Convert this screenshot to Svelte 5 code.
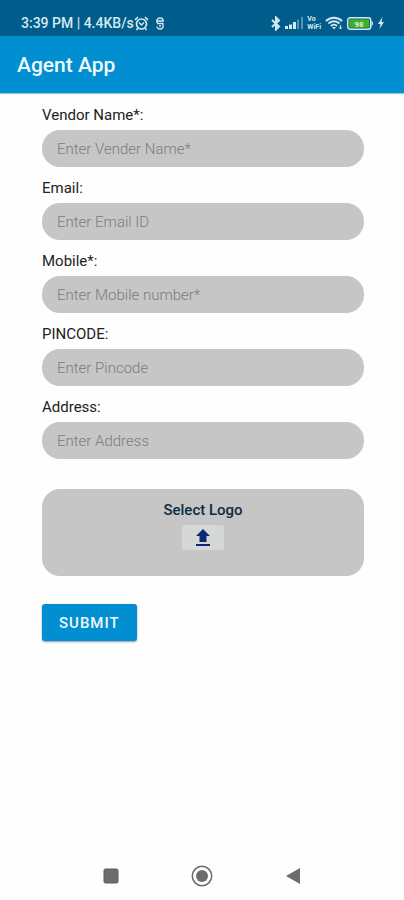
<script lang="ts">
  // Vendor registration form of the agent app.
  type Field = { id: string; label: string; placeholder: string; type: string };

  const fields: Field[] = [
    { id: 'vendor', label: 'Vendor Name*:', placeholder: 'Enter Vender Name*', type: 'text' },
    { id: 'email', label: 'Email:', placeholder: 'Enter Email ID', type: 'email' },
    { id: 'mobile', label: 'Mobile*:', placeholder: 'Enter Mobile number*', type: 'tel' },
    { id: 'pincode', label: 'PINCODE:', placeholder: 'Enter Pincode', type: 'text' },
    { id: 'address', label: 'Address:', placeholder: 'Enter Address', type: 'text' },
  ];

  let values = $state<Record<string, string>>({
    vendor: '',
    email: '',
    mobile: '',
    pincode: '',
    address: '',
  });

  let picker: HTMLInputElement;

  function submit(e: SubmitEvent) {
    e.preventDefault();
  }
</script>

<div class="screen">
  <div class="status">
    <div class="group">
      <span>3:39 PM | 4.4KB/s</span>
      <svg class="alarm" width="15" height="15" viewBox="0 0 15 15" fill="none" stroke="currentColor" aria-hidden="true">
        <circle cx="7.5" cy="8" r="5" stroke-width="1.700" />
        <path d="M1 4l3-3M14 4l-3-3M3.500 12.500l-1 1.500M11.500 12.500l1 1.500" stroke-width="1.700" />
        <path d="M5 6.500l2.500 2.500 2.500-2.500" stroke-width="1.500" />
      </svg>
      <svg width="10" height="13" viewBox="0 0 10 13" fill="none" stroke="currentColor" aria-hidden="true">
        <path d="M2 6V3.500C2 2 3 1 5 1s3 1 3 2.500M1 4h8M2 6.500h6M8 6v3.500C8 11 7 12 5 12s-3-1-3-2.500M4 9h2" stroke-width="1.300" />
      </svg>
    </div>
    <div class="group right">
      <svg width="10" height="15" viewBox="0 0 10 15" fill="none" stroke="currentColor" aria-hidden="true">
        <path d="M1 4l7 6.500L5 13.500v-12l3 3L1 11" stroke-width="2" />
      </svg>
      <svg width="18" height="12" viewBox="0 0 18 12" fill="currentColor" aria-hidden="true">
        <path d="M0 9h3v3H0zM4 7.500h3V12H4zM8 5h3v7H8z" />
        <path d="M12 2.500h2V12h-2zM16 0h2v12h-2z" opacity="0.4" />
      </svg>
      <span class="vowifi"><span>Vo</span><span>WiFi</span></span>
      <svg width="18" height="14" viewBox="0 0 18 14" fill="none" stroke="currentColor" aria-hidden="true">
        <path d="M1 5c4.500-4.500 11.500-4.500 16 0M3.500 7.500c3-3 8-3 11 0M6 10c1.700-1.700 4.300-1.700 6 0" stroke-width="2" />
        <path d="M7 11h4l-2 2.500z" fill="currentColor" stroke="none" />
        <path d="M15.500 9v4M14 11.500l1.500 1.500 1.500-1.500" stroke-width="1" />
      </svg>
      <svg width="27" height="13" viewBox="0 0 27 13" role="img" aria-label="Battery 98 percent">
        <rect x="0.700" y="0.700" width="23" height="11.600" rx="2.500" fill="none" stroke="currentColor" stroke-width="1.400" />
        <rect x="2.200" y="2.200" width="20" height="8.600" rx="1" fill="#3fae29" />
        <path d="M24.500 4c2 .5 2 4.500 0 5z" fill="currentColor" />
        <text x="12" y="9.500" text-anchor="middle">98</text>
      </svg>
      <svg width="6" height="12" viewBox="0 0 6 12" fill="currentColor" aria-hidden="true">
        <path d="M4.500 0L0 7h2.500L1.500 12 6 5H3.500z" />
      </svg>
    </div>
  </div>

  <header>
    <h1>Agent App</h1>
  </header>

  <form onsubmit={submit} novalidate>
    {#each fields as field (field.id)}
      <div class="field">
        <label for={field.id}>{field.label}</label>
        <input id={field.id} type={field.type} placeholder={field.placeholder} bind:value={values[field.id]} />
      </div>
    {/each}

    <div class="logo-box">
      <label for="logo">Select Logo</label>
      <button type="button" class="upload" aria-label="Upload logo" onclick={() => picker.click()}>
        <svg width="16" height="18" viewBox="0 0 16 18" fill="currentColor" aria-hidden="true">
          <path d="M8 0l7 7h-3.500v6h-7V7H1zM1 15h14v2H1z" />
        </svg>
      </button>
      <input id="logo" type="file" accept="image/*" hidden bind:this={picker} />
    </div>

    <button type="submit" class="submit">SUBMIT</button>
  </form>

  <nav aria-label="System">
    <button type="button" aria-label="Recent apps">
      <svg width="22" height="22" viewBox="0 0 22 22" aria-hidden="true">
        <rect x="4" y="4" width="14" height="14" rx="1.500" fill="currentColor" stroke="#5c5c5c" />
      </svg>
    </button>
    <button type="button" aria-label="Home">
      <svg width="22" height="22" viewBox="0 0 22 22" aria-hidden="true">
        <circle cx="11" cy="11" r="9.700" fill="none" stroke="currentColor" stroke-width="1.500" />
        <circle cx="11" cy="11" r="6" fill="currentColor" />
      </svg>
    </button>
    <button type="button" aria-label="Back">
      <svg width="22" height="22" viewBox="0 0 22 22" aria-hidden="true">
        <path d="M4 11L18 3v16z" fill="currentColor" />
      </svg>
    </button>
  </nav>
</div>

<style>
  :global(body) { margin: 0; background: #fefefe; }

  .screen {
    display: flex;
    flex-direction: column;
    min-height: 100vh;
    font-family: Roboto, 'Liberation Sans', sans-serif;
    color: #222;
  }

  .status {
    display: flex;
    justify-content: space-between;
    align-items: center;
    box-sizing: border-box;
    height: 36px;
    padding: 10px 20px 0 21px;
    background: #005d8b;
    color: #d5e9f2;
    font-size: 14px;
    font-weight: 500;
    line-height: 16px;
  }
  .group { display: flex; align-items: center; }
  .group .alarm { margin-right: 6px; }
  .right { gap: 4px; }
  .vowifi {
    display: flex;
    flex-direction: column;
    font-size: 7px;
    font-weight: 700;
    line-height: 8px;
  }
  .status text { font-size: 8px; font-weight: 700; fill: #d9f5c8; }

  header {
    display: flex;
    align-items: center;
    height: 57px;
    padding: 0 17px;
    background: #028fd1;
    box-shadow: 0 1px 1px #9cc9e2;
  }
  h1 {
    margin: 0;
    color: #eef9ff;
    font-size: 21px;
    font-weight: 500;
    line-height: 24px;
  }

  form {
    display: flex;
    flex-direction: column;
    gap: 11px;
    padding: 12px 40px 12px 42px;
  }
  .field { display: flex; flex-direction: column; gap: 5px; }
  .field label { font-size: 15px; line-height: 20px; }
  .field input {
    box-sizing: border-box;
    width: 100%;
    height: 37px;
    padding: 0 15px;
    border: none;
    border-radius: 18px;
    background: #c6c6c6;
    color: #222;
    font-family: inherit;
    font-size: 15px;
  }
  .field input::placeholder { color: #7c7c7c; font-weight: 300; opacity: 1; }

  .logo-box {
    display: flex;
    flex-direction: column;
    align-items: center;
    gap: 5px;
    margin-top: 19px;
    padding: 11px 16px 26px;
    border-radius: 18px;
    background: #c6c6c6;
  }
  .logo-box label {
    color: #102c40;
    font-size: 15px;
    font-weight: 500;
    line-height: 20px;
  }
  .upload {
    display: flex;
    justify-content: center;
    align-items: center;
    width: 42px;
    height: 25px;
    padding: 0;
    border: none;
    border-radius: 3px;
    background: #d6d8d8;
    color: #0a2a72;
  }

  .submit {
    align-self: flex-start;
    height: 37px;
    margin-top: 17px;
    padding: 0 17px;
    border: none;
    border-radius: 3px;
    background: #028fd1;
    box-shadow: 0 1px 2px #8a9aa2;
    color: #eef9ff;
    font-family: inherit;
    font-size: 15px;
    font-weight: 500;
    letter-spacing: 1px;
  }

  nav {
    display: flex;
    justify-content: center;
    gap: 69px;
    margin-top: auto;
    padding-bottom: 13px;
  }
  nav button {
    display: flex;
    padding: 0;
    border: none;
    background: none;
    color: #6c6c6c;
  }
  nav svg { display: block; }
</style>
